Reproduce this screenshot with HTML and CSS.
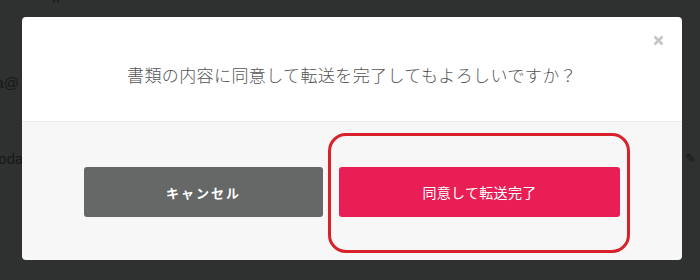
FILE: index.html
```html
<!DOCTYPE html>
<html lang="ja">
<head>
<meta charset="utf-8">
<link rel="stylesheet" href="styles.css">
</head>
<body>
<div class="page">
  <div class="row row-top"><span class="frag f1">@mail.co.jp</span><span class="frag f2">○ ◯</span></div>
  <div class="row row-mid"><span class="frag f3">ya@</span></div>
  <div class="row row-low"><span class="frag f4">noda</span><span class="frag-icon">✎</span></div>
</div>
<div class="modal">
  <button class="close" aria-label="閉じる">
    <svg width="11" height="11" viewBox="0 0 11 11"><path d="M1.5 1.5 L9.5 9.5 M9.5 1.5 L1.5 9.5" stroke="#c6c6c6" stroke-width="2.6" stroke-linecap="butt"/></svg>
  </button>
  <div class="modal-body">
    <p class="message">書類の内容に同意して転送を完了してもよろしいですか？</p>
  </div>
  <div class="modal-footer">
    <button class="btn btn-cancel">キャンセル</button>
    <button class="btn btn-primary">同意して転送完了</button>
  </div>
  <div class="highlight"></div>
</div>
</body>
</html>
```

FILE: styles.css
```css
html, body {
  margin: 0;
  padding: 0;
  width: 700px;
  height: 280px;
  overflow: hidden;
  background: #2f3030;
  font-family: "Noto Sans CJK JP", "Noto Sans", sans-serif;
}

.page {
  display: flex;
  flex-direction: column;
  height: 280px;
}

.row {
  display: flex;
  align-items: center;
  color: #171818;
  font-family: "Liberation Sans", sans-serif;
  font-size: 15px;
  position: relative;
}

.row-top {
  height: 10px;
  margin-top: -12px;
  gap: 260px;
}

.row-mid {
  margin-top: 74px;
  height: 20px;
}

.row-low {
  margin-top: 56px;
  height: 20px;
  justify-content: space-between;
}

.frag {
  white-space: nowrap;
}

.f1 { margin-left: -14px; }
.f3 { margin-left: -12px; }
.f4 { margin-left: -10px; }

.frag-icon {
  font-size: 13px;
  margin-right: 4px;
  color: #151616;
}

.modal {
  position: absolute;
  left: 22px;
  top: 17px;
  width: 660px;
  height: 243px;
  border-radius: 4px;
  display: flex;
  flex-direction: column;
}

.close {
  position: absolute;
  top: 18px;
  right: 18px;
  width: 11px;
  height: 11px;
  padding: 0;
  border: 0;
  background: none;
  display: flex;
}

.modal-body {
  height: 104px;
  background: #ffffff;
  border-bottom: 1px solid #ececec;
  border-radius: 4px 4px 0 0;
  display: flex;
  justify-content: center;
}

.message {
  margin: 46px 0 0 0;
  font-size: 17px;
  line-height: 24px;
  font-weight: 300;
  letter-spacing: 0.4px;
  color: #555555;
}

.modal-footer {
  flex: 1;
  background: #f7f7f7;
  border-radius: 0 0 4px 4px;
  display: grid;
  grid-template-columns: 239px 281px;
  column-gap: 16px;
  padding: 45px 62px 0 62px;
  align-content: start;
}

.btn {
  height: 50px;
  border: 0;
  border-radius: 3px;
  color: #ffffff;
  font-family: "Noto Sans CJK JP", "Noto Sans", sans-serif;
  font-size: 13px;
  cursor: pointer;
}

.btn-cancel {
  background: #666867;
  font-weight: 700;
  letter-spacing: 2px;
}

.btn-primary {
  background: #e91e55;
  font-size: 14px;
  font-weight: 400;
  letter-spacing: 0.3px;
}

.highlight {
  position: absolute;
  left: 306px;
  top: 116px;
  width: 296px;
  height: 114px;
  border: 3px solid #d9212b;
  border-radius: 18px;
  pointer-events: none;
}
```
